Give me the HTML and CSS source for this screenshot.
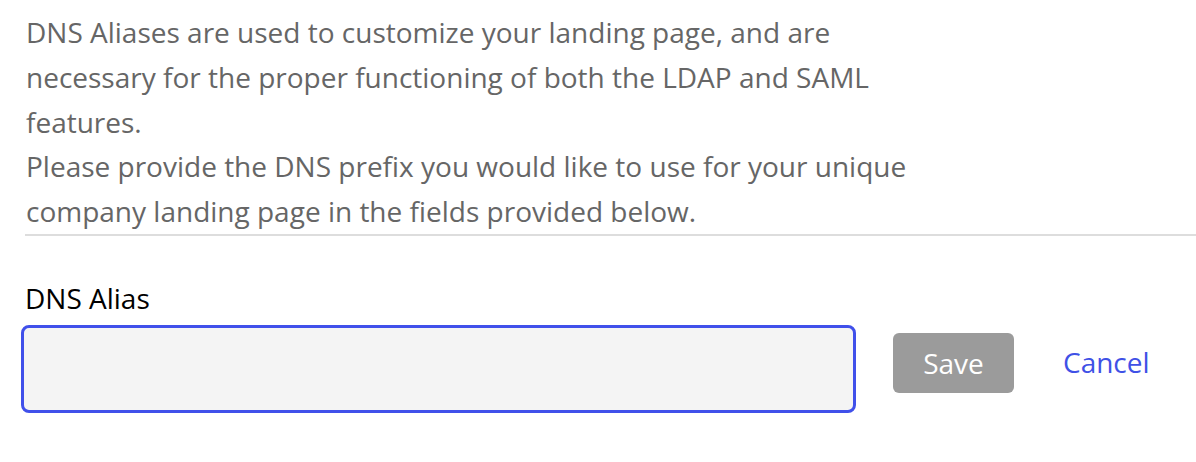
FILE: index.html
```html
<!DOCTYPE html>
<html lang="en">
<head>
    <meta charset="UTF-8">
    <meta name="viewport" content="width=device-width, initial-scale=1.0">
    <title>DNS Alias</title>
    <link rel="stylesheet" href="styles.css">
</head>
<body>
    <div class="intro">
        <p>DNS Aliases are used to customize your landing page, and are necessary for the proper functioning of both the LDAP and SAML features.</p>
        <p>Please provide the DNS prefix you would like to use for your unique company landing page in the fields provided below.</p>
    </div>

    <div class="alias-form">
        <label for="alias">DNS Alias</label>
        <div class="alias-row">
            <input type="text" id="alias">
            <button class="save-btn" disabled>Save</button>
            <a class="cancel-link" href="#">Cancel</a>
        </div>
    </div>
</body>
</html>
```

FILE: styles.css
```css
body {
    margin: 0;
    font-family: "Open Sans", sans-serif;
    background-color: #fff;
}
.intro {
    margin-left: 25px;
    padding: 10px 0 0 0;
    border-bottom: 2px solid #dddddd;
}
.intro p {
    margin: 0 0 0 1px;
    width: 900px;
    font-size: 28px;
    line-height: 1.6;
    color: #666666;
}
.alias-form {
    padding: 43px 0 0 25px;
}
.alias-form label {
    display: block;
    font-size: 28px;
    line-height: 38px;
    color: #000;
}
.alias-row {
    display: flex;
    align-items: flex-start;
    margin-top: 8px;
    margin-left: -4px;
}
.alias-row input {
    box-sizing: border-box;
    width: 835px;
    height: 88px;
    background-color: #f4f4f4;
    border: 3px solid #4050ea;
    border-radius: 8px;
    outline: none;
    font-family: inherit;
    font-size: 28px;
    padding: 0 16px;
}
.save-btn {
    margin: 8px 0 0 37px;
    width: 121px;
    height: 60px;
    padding: 0;
    border: none;
    border-radius: 6px;
    background-color: #9b9b9b;
    color: #fff;
    font-family: inherit;
    font-size: 28px;
}
.cancel-link {
    margin: 7px 0 0 49px;
    line-height: 60px;
    font-size: 28px;
    color: #3f51e6;
    text-decoration: none;
}
```
